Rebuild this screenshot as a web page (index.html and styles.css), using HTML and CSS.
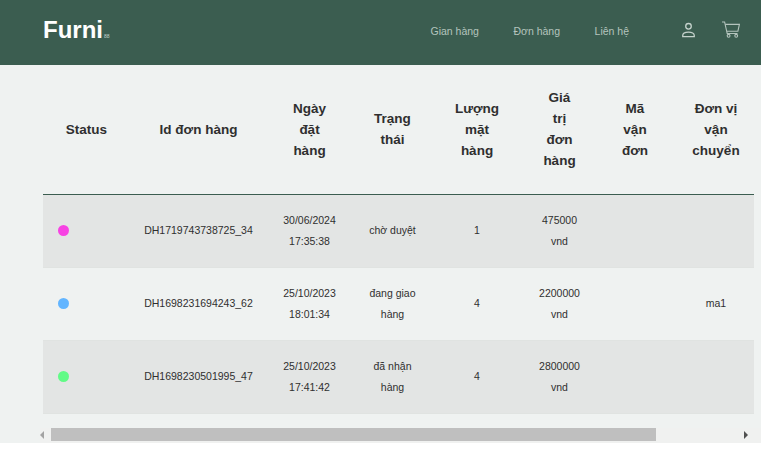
FILE: index.html
```html
<!DOCTYPE html>
<html lang="en">
<head>
    <meta charset="UTF-8">
    <meta name="viewport" content="width=device-width, initial-scale=1.0">
    <title>Furni - Đơn hàng</title>
    <link rel="stylesheet" href="styles.css">
</head>
<body>
    <!-- Header -->
    <header class="navbar">
        <a class="brand" href="#">Furni<span class="brand-mark">88</span></a>
        <nav class="nav-links">
            <a href="#">Gian hàng</a>
            <a href="#">Đơn hàng</a>
            <a href="#">Liên hệ</a>
        </nav>
        <div class="nav-icons">
            <svg class="icon-user" viewBox="0 0 14 16" width="13" height="16" fill="none" stroke="#c5d2cc" stroke-width="1.4">
                <circle cx="7" cy="4" r="3"/>
                <path d="M0.8 15.2h12.4v-1.4c0-2.2-2.5-3.6-6.2-3.6s-6.2 1.4-6.2 3.6z"/>
            </svg>
            <svg class="icon-cart" viewBox="0 0 18 17" width="18" height="17" fill="none" stroke="#b4c4bd" stroke-width="1.1">
                <path d="M0 1h2.6l2.6 11.5h10.3"/>
                <path d="M3.2 3.4h14.2l-1.5 6.8H4.7"/>
                <circle cx="6.6" cy="14.8" r="1.4"/>
                <circle cx="14.2" cy="14.8" r="1.4"/>
            </svg>
        </div>
    </header>

    <main class="content">
        <div class="table-wrap">
            <table class="orders">
                <thead>
                    <tr>
                        <th class="col-status">Status</th>
                        <th class="col-id">Id đơn hàng</th>
                        <th class="col-date">Ngày<br>đặt<br>hàng</th>
                        <th class="col-state">Trạng<br>thái</th>
                        <th class="col-qty">Lượng<br>mặt<br>hàng</th>
                        <th class="col-total">Giá<br>trị<br>đơn<br>hàng</th>
                        <th class="col-code">Mã<br>vận<br>đơn</th>
                        <th class="col-ship">Đơn vị<br>vận<br>chuyển</th>
                    </tr>
                </thead>
                <tbody>
                    <tr>
                        <td><span class="dot dot-pink"></span></td>
                        <td>DH1719743738725_34</td>
                        <td>30/06/2024<br>17:35:38</td>
                        <td>chờ duyệt</td>
                        <td>1</td>
                        <td>475000<br>vnd</td>
                        <td></td>
                        <td></td>
                    </tr>
                    <tr>
                        <td><span class="dot dot-blue"></span></td>
                        <td>DH1698231694243_62</td>
                        <td>25/10/2023<br>18:01:34</td>
                        <td>đang giao<br>hàng</td>
                        <td>4</td>
                        <td>2200000<br>vnd</td>
                        <td></td>
                        <td>ma1</td>
                    </tr>
                    <tr>
                        <td><span class="dot dot-green"></span></td>
                        <td>DH1698230501995_47</td>
                        <td>25/10/2023<br>17:41:42</td>
                        <td>đã nhận<br>hàng</td>
                        <td>4</td>
                        <td>2800000<br>vnd</td>
                        <td></td>
                        <td></td>
                    </tr>
                </tbody>
            </table>
        </div>

        <!-- Scrollbar -->
        <div class="scrollbar">
            <span class="arrow arrow-left"></span>
            <div class="scroll-track"><div class="scroll-thumb"></div></div>
            <span class="arrow arrow-right"></span>
        </div>
    </main>
</body>
</html>
```

FILE: styles.css
```css
* {
    box-sizing: border-box;
}

body {
    margin: 0;
    background: #fff;
    font-family: "Liberation Sans", Arial, sans-serif;
    color: #2f2f2f;
    overflow: hidden;
}

/* Header */
.navbar {
    height: 65px;
    background: #3b5d50;
    display: flex;
    align-items: center;
    padding: 0 21px 0 43px;
}

.brand {
    font-size: 24px;
    font-weight: bold;
    color: #fff;
    text-decoration: none;
    margin-bottom: 6px;
}

.brand-mark {
    font-size: 5px;
    font-weight: normal;
    color: #c5d2cc;
    margin-left: 1px;
}

.nav-links {
    margin-left: auto;
    display: flex;
    gap: 34.5px;
    font-size: 10.5px;
    margin-bottom: 3px;
}

.nav-links a {
    color: #b4c4bd;
    text-decoration: none;
}

.nav-icons {
    display: flex;
    align-items: center;
    gap: 27px;
    margin-left: 53px;
    margin-bottom: 6px;
}

/* Table */
.content {
    height: 378px;
    background: #eff2f1;
    padding: 0 0 0 43px;
}

.table-wrap {
    width: 711px;
    overflow: hidden;
}

.orders {
    width: 711px;
    table-layout: fixed;
    border-collapse: collapse;
}

.orders th {
    height: 129px;
    padding: 0 4px;
    font-size: 13.5px;
    line-height: 21px;
    font-weight: bold;
    text-align: center;
    border-bottom: 1px solid #3b5d50;
}

.orders td {
    height: 73px;
    padding: 0 4px;
    font-size: 10.5px;
    line-height: 20.5px;
    text-align: center;
    border-bottom: 1px solid #e0e3e1;
}

.orders th:last-child,
.orders td:last-child {
    padding-left: 7px;
    padding-right: 1px;
}

.orders tbody tr:nth-child(odd) {
    background: #e3e5e4;
}

.col-status { width: 87px; }
.col-id { width: 137px; }
.col-date { width: 85px; }
.col-state { width: 81px; }
.col-qty { width: 88px; }
.col-total { width: 77px; }
.col-code { width: 74px; }
.col-ship { width: 82px; }

.dot {
    display: block;
    width: 11px;
    height: 11px;
    margin-left: 11px;
    border-radius: 50%;
}

.dot-pink { background: #f743e3; }
.dot-blue { background: #62b5ff; }
.dot-green { background: #62fb87; }

/* Scrollbar */
.scrollbar {
    margin: 14px 0 0 -3px;
    height: 15px;
    display: flex;
    align-items: flex-start;
    padding-right: 13px;
    background: #f0f1f0;
}

.scroll-track {
    flex: 1;
    height: 13px;
    margin: 0 0 0 7px;
}

.scroll-thumb {
    width: 605px;
    height: 13px;
    background: #bfbfbf;
}

.arrow {
    width: 0;
    height: 0;
    margin-top: 3px;
    border-top: 4px solid transparent;
    border-bottom: 4px solid transparent;
}

.arrow-left {
    border-right: 4px solid #a3a3a3;
}

.arrow-right {
    border-left: 4px solid #505050;
}
```
